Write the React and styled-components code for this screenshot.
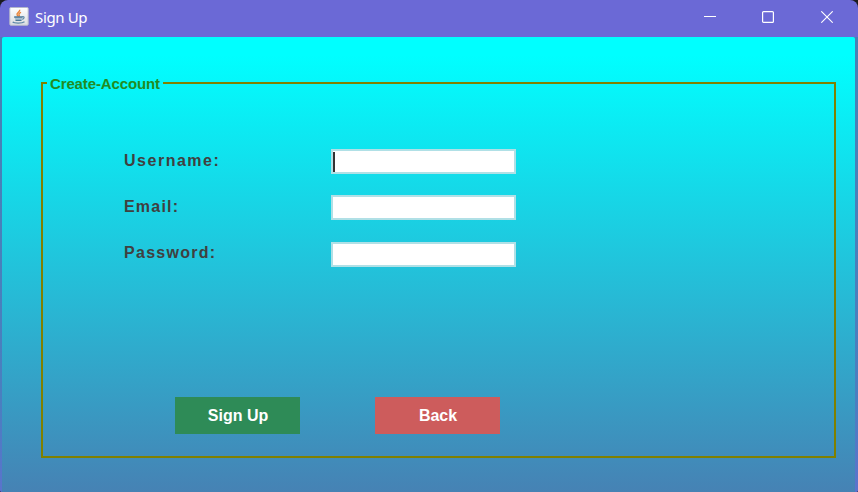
import React from "react";
import styled, { createGlobalStyle } from "styled-components";

const GlobalStyle = createGlobalStyle`
  * { box-sizing: border-box; }
  body { margin: 0; background: #1a1a1e; overflow: hidden; }
`;

const Window = styled.div`
  width: 858px;
  height: 492px;
  display: flex;
  flex-direction: column;
  overflow: hidden;
  border-radius: 8px 8px 2px 2px;
  background: #6b69d6;
  font-family: "Liberation Sans", Arial, sans-serif;
`;

const TitleBar = styled.header`
  height: 37px;
  flex: none;
  display: flex;
  align-items: center;
  padding: 0 2px 3px 9px;
`;

const Title = styled.h1`
  flex: 1;
  margin: 0 0 1px 6px;
  font: 400 15px/20px "Noto Sans", "Open Sans", sans-serif;
  letter-spacing: ${(p) => p.$tracking};
  color: #fff;
`;

const WindowControl = styled.button`
  width: 58.5px;
  height: 33px;
  padding: 0;
  border: 0;
  background: none;
  display: grid;
  place-items: center;
`;

const Frame = styled.main`
  flex: 1;
  display: flex;
  padding: 0 3px 0 2px;
  background: linear-gradient(#4682b4, #4a7fc0 80%, #5b73cc);
`;

const Content = styled.div`
  flex: 1;
  padding: 45px 19px 34px 39px;
  border-radius: 2px 2px 0 0;
  background: linear-gradient(#00ffff 4%, #4682b4 100%);
`;

const AccountForm = styled.form`
  height: 376px;
  display: flex;
  flex-direction: column;
`;

const GroupTop = styled.div`
  height: 2px;
  flex: none;
  display: flex;
  align-items: center;

  &::before {
    content: "";
    width: 6px;
    height: 2px;
    background: #808000;
  }

  &::after {
    content: "";
    flex: 1;
    height: 2px;
    background: #808000;
  }
`;

const GroupTitle = styled.span`
  width: 116px;
  padding-left: 3px;
  margin-top: 1px;
  font-size: 15px;
  line-height: 18px;
  font-weight: 700;
  letter-spacing: -0.13px;
  white-space: nowrap;
  color: #228b22;
`;

const GroupBody = styled.div`
  flex: 1;
  display: flex;
  flex-direction: column;
  justify-content: space-between;
  padding: 65px 0 22px 81px;
  border: 2px solid #808000;
  border-top: 0;
`;

const Fields = styled.div`
  display: grid;
  grid-template-columns: 207px 185px;
  grid-template-rows: 25px 25px 25px;
  row-gap: 21.4px;
`;

const Label = styled.label`
  font-size: 16px;
  line-height: ${(p) => p.$leading};
  font-weight: 700;
  letter-spacing: ${(p) => p.$tracking};
  color: #404040;
`;

const TextField = styled.div`
  display: flex;
  height: 25px;
  padding-top: 1px;
  border: 2px solid #b0e0e6;
  background: #fff;
`;

const Caret = styled.span`
  width: 2px;
  height: 20px;
  background: #333;
`;

const Actions = styled.div`
  display: flex;
  gap: 75px;
  padding-left: 51px;
`;

const ActionButton = styled.button`
  width: 125px;
  height: 37px;
  padding: 0 0 0 ${(p) => p.$shift};
  border: 0;
  background: ${(p) => p.$color};
  color: #fff;
  font: 700 16px/37px "Liberation Sans", Arial, sans-serif;
`;

const JavaIcon = () => (
  <svg width="20" height="20" viewBox="0 0 20 20" fill="none">
    <defs>
      <linearGradient id="tile" x2="0" y2="1">
        <stop stopColor="#fff" />
        <stop offset="1" stopColor="#d9dde0" />
      </linearGradient>
    </defs>
    <rect x=".8" y=".5" width="18.4" height="17.8" rx="1" fill="url(#tile)" stroke="#b5b8cb" />
    <path d="M10.6 2.8c1 2-3.5 3-2.5 5 .4 1 1 1.2 1.3 2M12 5.3c-2 1-2.5 1.7-1.8 2.8.5.8 0 1.3-.5 1.7" stroke="#e98438" strokeWidth="1.4" />
    <path d="M5.2 10h8.3l-1 3.6H6.8z" fill="#a9c0cf" />
    <path d="M5.2 10h8.2M6.5 13.3h6" stroke="#4c7898" strokeWidth="1.3" />
    <path d="M13 9.8c3-.8 2.5 2 .2 2.6M3.7 14.8c1.5 1.7 9.5 1.7 11.8-.1" stroke="#5d88a8" strokeWidth="1.2" />
  </svg>
);

const fields = [
  { label: "Username:", tracking: "1.52px", leading: "23px", focused: true },
  { label: "Email:", tracking: "1.2px", leading: "23px" },
  { label: "Password:", tracking: "1.28px", leading: "22px" },
];

export default function App() {
  return (
    <>
      <GlobalStyle />
      <Window>
        <TitleBar>
          <JavaIcon />
          <Title $tracking="-0.35px">Sign Up</Title>
          <WindowControl aria-label="Minimize">
            <svg width="12" height="12"><path d="M0 5.5h12" stroke="#fff" /></svg>
          </WindowControl>
          <WindowControl aria-label="Maximize">
            <svg width="12" height="12"><rect x=".6" y=".6" width="10.8" height="10.8" rx="1" fill="none" stroke="#fff" strokeWidth="1.2" /></svg>
          </WindowControl>
          <WindowControl aria-label="Close">
            <svg width="12" height="12"><path d="M.3.3l11.4 11.4M11.7.3L.3 11.7" stroke="#fff" strokeWidth="1.1" /></svg>
          </WindowControl>
        </TitleBar>
        <Frame>
          <Content>
            <AccountForm>
              <GroupTop><GroupTitle>Create-Account</GroupTitle></GroupTop>
              <GroupBody>
                <Fields>
                  {fields.map((f) => (
                    <React.Fragment key={f.label}>
                      <Label $tracking={f.tracking} $leading={f.leading}>{f.label}</Label>
                      <TextField>{f.focused && <Caret />}</TextField>
                    </React.Fragment>
                  ))}
                </Fields>
                <Actions>
                  <ActionButton type="button" $color="#2e8b57" $shift="1px">Sign Up</ActionButton>
                  <ActionButton type="button" $color="#cd5c5c" $shift="1px">Back</ActionButton>
                </Actions>
              </GroupBody>
            </AccountForm>
          </Content>
        </Frame>
      </Window>
    </>
  );
}
